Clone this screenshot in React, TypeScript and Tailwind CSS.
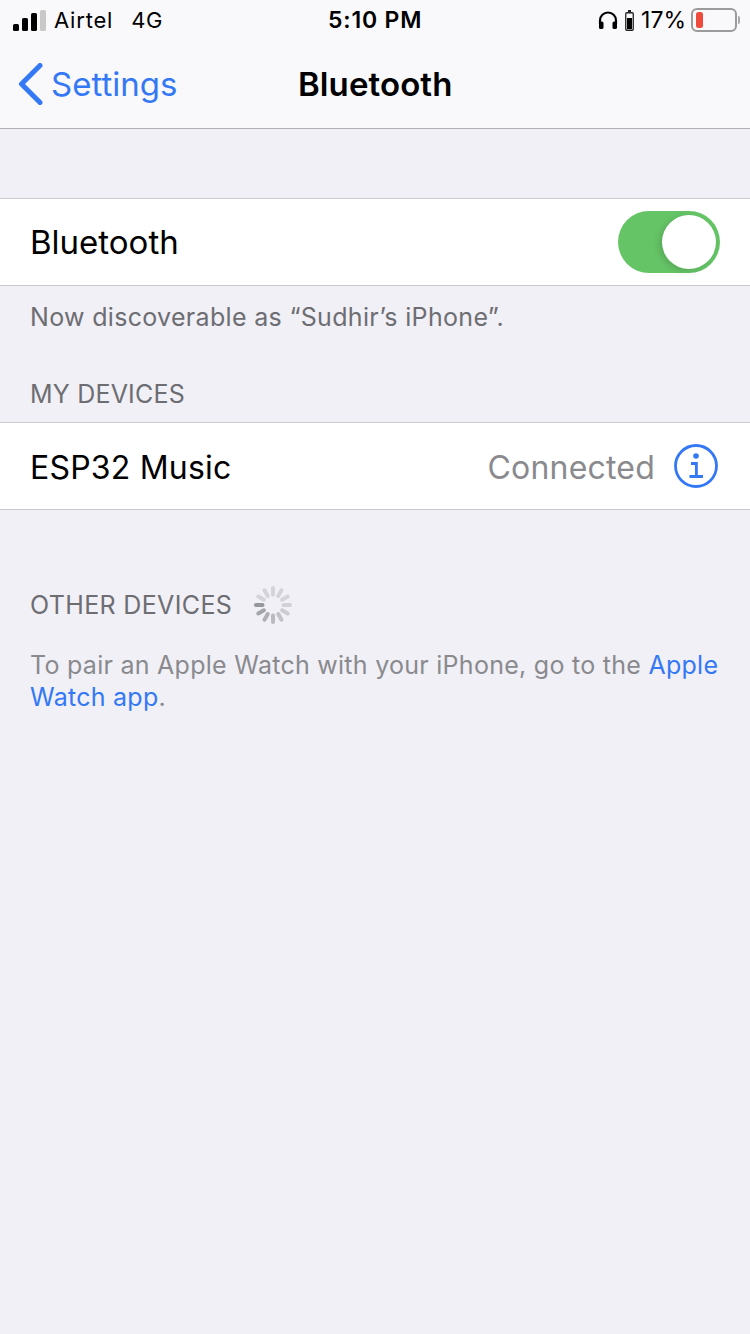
const fontStack = { fontFamily: 'Inter, "Liberation Sans", sans-serif' }

function SignalBars() {
  return (
    <div className="flex items-end gap-[3px]">
      <span className="h-[7px] w-[6px] rounded-[1.5px] bg-black" />
      <span className="h-[13px] w-[6px] rounded-[1.5px] bg-black" />
      <span className="h-[18px] w-[6px] rounded-[1.5px] bg-black" />
      <span className="h-[21px] w-[6px] rounded-[1.5px] bg-[#c8c8c8]" />
    </div>
  )
}

function Headphones() {
  return (
    <svg width="20" height="18" viewBox="0 0 20 18" fill="none" aria-hidden>
      <path d="M2 13V9.5a8 8 0 0 1 16 0V13" stroke="#000" strokeWidth="2.2" />
      <rect x="1" y="10.5" width="4.5" height="7.5" rx="1.6" fill="#000" />
      <rect x="14.5" y="10.5" width="4.5" height="7.5" rx="1.6" fill="#000" />
    </svg>
  )
}

function SmallBattery() {
  return (
    <svg width="9" height="21" viewBox="0 0 9 21" fill="none" aria-hidden>
      <rect x="3" y="0" width="3" height="2.5" fill="#222" />
      <rect x="0.75" y="2.75" width="7.5" height="17.5" rx="1" stroke="#222" strokeWidth="1.3" />
      <rect x="2" y="8" width="5" height="11" fill="#000" />
    </svg>
  )
}

function Battery() {
  return (
    <div className="flex items-center">
      <div className="flex h-[24px] w-[46px] items-center rounded-[6px] border-[2px] border-[#9b9b9b] pl-[3px]">
        <span className="h-[16px] w-[7px] rounded-[2.5px] bg-[#ef4b3c]" />
      </div>
      <span className="ml-[1px] h-[8px] w-[2px] rounded-r-full bg-[#a8a8a8]" />
    </div>
  )
}

function Toggle() {
  return (
    <div className="flex h-[62px] w-[102px] items-center justify-end rounded-full bg-[#65c466] pr-[4px]">
      <span className="h-[54px] w-[54px] rounded-full bg-white shadow-[-3px_2px_6px_rgba(0,0,0,0.13)]" />
    </div>
  )
}

function InfoIcon() {
  return (
    <svg width="44" height="44" viewBox="0 0 44 44" fill="none" aria-hidden>
      <circle cx="22" cy="22" r="20.5" stroke="#3478f6" strokeWidth="2.8" />
      <circle cx="22" cy="12" r="2.8" fill="#3478f6" />
      <path d="M17 19.5h5.4V32.5M15.5 32.5h13.5" stroke="#3478f6" strokeWidth="2.8" />
    </svg>
  )
}

function Spinner() {
  // darkest spoke at 9 o'clock, fading counter-clockwise
  const opacities = [0.5, 0.42, 0.36, 0.3, 0.26, 0.2, 0.17, 0.16, 0.16, 0.16, 0.16, 0.16]
  return (
    <svg width="40" height="40" viewBox="0 0 40 40" aria-hidden>
      {opacities.map((opacity, i) => (
        <rect
          key={i}
          x="18"
          y="1"
          width="4"
          height="10.5"
          rx="2"
          fill="#3c3c43"
          opacity={opacity}
          transform={`rotate(${270 - i * 30} 20 20)`}
        />
      ))}
    </svg>
  )
}

export default function App() {
  return (
    <div className="flex min-h-[1334px] flex-col bg-[#f0f0f6] text-black" style={fontStack}>
      <header className="border-b border-[#b2b2b4] bg-[#f9f9fb]">
        <div className="relative flex h-[40px] items-center justify-between pl-[13px] pr-[10px]">
          <div className="flex items-center">
            <SignalBars />
            <span className="ml-[8px] text-[22px] tracking-[0.8px]">Airtel</span>
            <span className="ml-[18px] text-[22px] tracking-[0.7px]">4G</span>
          </div>
          <span className="absolute left-[328px] text-[23px] font-semibold tracking-[0.8px]">5:10 PM</span>
          <div className="flex items-center">
            <Headphones />
            <span className="ml-[7px]"><SmallBattery /></span>
            <span className="ml-[7px] text-[23px]">17%</span>
            <span className="ml-[5px]"><Battery /></span>
          </div>
        </div>
        <div className="relative flex h-[88px] items-center pl-[18px]">
          <svg width="25" height="42" viewBox="0 0 25 42" fill="none" aria-hidden>
            <path d="M22 2.5 3.5 21 22 39.5" stroke="#3478f6" strokeWidth="5" strokeLinecap="round" strokeLinejoin="round" />
          </svg>
          <span className="ml-[8px] pt-[2px] text-[33px] text-[#3478f6]">Settings</span>
          <span className="absolute left-[298px] pt-[2px] text-[33px] font-semibold tracking-[0.1px]">Bluetooth</span>
        </div>
      </header>

      <section className="mt-[69px] flex h-[88px] items-center justify-between border-y border-[#c9c9ce] bg-white pl-[30px] pr-[30px]">
        <span className="pt-[2px] text-[33px]">Bluetooth</span>
        <Toggle />
      </section>
      <p className="mt-[16px] pl-[30px] text-[25px] leading-[30px] tracking-[0.32px] text-[#6d6d72]">
        Now discoverable as “Sudhir’s iPhone”.
      </p>

      <h2 className="mt-[47px] pl-[30px] text-[25px] leading-[30px] tracking-[0.2px] text-[#6d6d72]">MY DEVICES</h2>
      <section className="mt-[13px] flex h-[88px] items-center border-y border-[#c9c9ce] bg-white pl-[30px] pr-[32px]">
        <span className="pt-[3px] text-[32px] tracking-[0.2px]">ESP32 Music</span>
        <span className="ml-auto pt-[3px] text-[32px] tracking-[0.2px] text-[#8a8a8e]">Connected</span>
        <span className="ml-[19px]"><InfoIcon /></span>
      </section>

      <div className="mt-[75px] flex items-center pl-[30px]">
        <h2 className="text-[25px] leading-[40px] tracking-[0.35px] text-[#6d6d72]">OTHER DEVICES</h2>
        <span className="ml-[21px]"><Spinner /></span>
      </div>
      <p className="mt-[24px] pl-[30px] pr-[30px] text-[25px] leading-[32px] tracking-[0.27px] text-[#8a8a8e]">
        To pair an Apple Watch with your iPhone, go to the <span className="text-[#3478f6]">Apple Watch app</span>.
      </p>
    </div>
  )
}
